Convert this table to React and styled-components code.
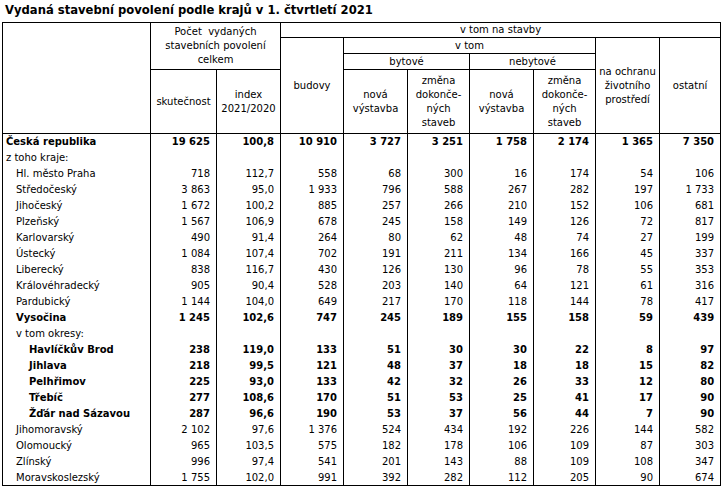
import React from 'react';
import styled, { createGlobalStyle } from 'styled-components';

const GlobalStyle = createGlobalStyle`
  body {
    margin: 0;
    background: #fff;
  }
`;

const Page = styled.div`
  padding-left: 2px;
  font-family: "DejaVu Sans", Tahoma, sans-serif;
  color: #000;
`;

const Title = styled.h1`
  margin: 0;
  height: 22px;
  padding-left: 3px;
  font-size: 11.6px;
  line-height: 20px;
  font-weight: bold;
  white-space: nowrap;
`;

const Table = styled.table`
  border-collapse: collapse;
  table-layout: fixed;
  width: 719px;
  border: 1px solid #000;
  font-size: 10px;
`;

const HeadRow = styled.tr`
  height: ${p => p.$h}px;
`;

const HeadCell = styled.th`
  border: 1px solid #000;
  padding: 0 2px;
  font-weight: normal;
  text-align: center;
  vertical-align: middle;
  line-height: 14px;
`;

const Row = styled.tr`
  height: 16px;
  font-weight: ${p => (p.$bold ? 'bold' : 'normal')};

  &:last-child {
    height: 15px;
  }
`;

const Label = styled.td`
  border-left: 1px solid #000;
  border-right: 1px solid #000;
  padding: 0 0 0 ${p => [3, 13, 26][p.$level]}px;
  line-height: 15px;
  vertical-align: middle;
  white-space: nowrap;
  overflow: hidden;
`;

const Num = styled.td`
  border-left: 1px solid #000;
  border-right: 1px solid #000;
  padding: 0 6px 0 0;
  text-align: right;
  line-height: 15px;
  vertical-align: middle;
  white-space: nowrap;
`;

const widths = [148, 66, 64, 63, 64, 62, 64, 62, 64, 61];

const rows = [
  ['Česká republika', 0, true, ['19 625', '100,8', '10 910', '3 727', '3 251', '1 758', '2 174', '1 365', '7 350']],
  ['z toho kraje:', 0, false, null],
  ['Hl. město Praha', 1, false, ['718', '112,7', '558', '68', '300', '16', '174', '54', '106']],
  ['Středočeský', 1, false, ['3 863', '95,0', '1 933', '796', '588', '267', '282', '197', '1 733']],
  ['Jihočeský', 1, false, ['1 672', '100,2', '885', '257', '266', '210', '152', '106', '681']],
  ['Plzeňský', 1, false, ['1 567', '106,9', '678', '245', '158', '149', '126', '72', '817']],
  ['Karlovarský', 1, false, ['490', '91,4', '264', '80', '62', '48', '74', '27', '199']],
  ['Ústecký', 1, false, ['1 084', '107,4', '702', '191', '211', '134', '166', '45', '337']],
  ['Liberecký', 1, false, ['838', '116,7', '430', '126', '130', '96', '78', '55', '353']],
  ['Královéhradecký', 1, false, ['905', '90,4', '528', '203', '140', '64', '121', '61', '316']],
  ['Pardubický', 1, false, ['1 144', '104,0', '649', '217', '170', '118', '144', '78', '417']],
  ['Vysočina', 1, true, ['1 245', '102,6', '747', '245', '189', '155', '158', '59', '439']],
  ['v tom okresy:', 1, false, null],
  ['Havlíčkův Brod', 2, true, ['238', '119,0', '133', '51', '30', '30', '22', '8', '97']],
  ['Jihlava', 2, true, ['218', '99,5', '121', '48', '37', '18', '18', '15', '82']],
  ['Pelhřimov', 2, true, ['225', '93,0', '133', '42', '32', '26', '33', '12', '80']],
  ['Třebíč', 2, true, ['277', '108,6', '170', '51', '53', '25', '41', '17', '90']],
  ['Žďár nad Sázavou', 2, true, ['287', '96,6', '190', '53', '37', '56', '44', '7', '90']],
  ['Jihomoravský', 1, false, ['2 102', '97,6', '1 376', '524', '434', '192', '226', '144', '582']],
  ['Olomoucký', 1, false, ['965', '103,5', '575', '182', '178', '106', '109', '87', '303']],
  ['Zlínský', 1, false, ['996', '97,4', '541', '201', '143', '88', '109', '108', '347']],
  ['Moravskoslezský', 1, false, ['1 755', '102,0', '991', '392', '282', '112', '205', '90', '674']],
];

// spaces inside numbers must not wrap
const nb = s => s.replace(/ /g, '\u00a0');

export default function App() {
  return (
    <Page>
      <GlobalStyle />
      <Title>Vydaná stavební povolení podle krajů v 1. čtvrtletí 2021</Title>
      <Table>
        <colgroup>
          {widths.map((w, i) => <col key={i} style={{ width: w }} />)}
        </colgroup>
        <thead>
          <HeadRow $h={15}>
            <HeadCell rowSpan={4} />
            <HeadCell rowSpan={3} colSpan={2}>
              Počet&nbsp; vydaných<br />stavebních povolení<br />celkem
            </HeadCell>
            <HeadCell colSpan={7}>v tom na stavby</HeadCell>
          </HeadRow>
          <HeadRow $h={16}>
            <HeadCell rowSpan={3}>budovy</HeadCell>
            <HeadCell colSpan={4}>v tom</HeadCell>
            <HeadCell rowSpan={3}>na ochranu<br />životního<br />prostředí</HeadCell>
            <HeadCell rowSpan={3}>ostatní</HeadCell>
          </HeadRow>
          <HeadRow $h={16}>
            <HeadCell colSpan={2}>bytové</HeadCell>
            <HeadCell colSpan={2}>nebytové</HeadCell>
          </HeadRow>
          <HeadRow $h={64}>
            <HeadCell>skutečnost</HeadCell>
            <HeadCell>index<br />2021/2020</HeadCell>
            <HeadCell>nová<br />výstavba</HeadCell>
            <HeadCell>změna<br />dokonče-<br />ných<br />staveb</HeadCell>
            <HeadCell>nová<br />výstavba</HeadCell>
            <HeadCell>změna<br />dokonče-<br />ných<br />staveb</HeadCell>
          </HeadRow>
        </thead>
        <tbody>
          {rows.map(([name, level, bold, vals]) => (
            <Row key={name} $bold={bold}>
              <Label $level={level}>{name}</Label>
              {(vals || Array(9).fill('')).map((v, i) => (
                <Num key={i}>{nb(v)}</Num>
              ))}
            </Row>
          ))}
        </tbody>
      </Table>
    </Page>
  );
}
